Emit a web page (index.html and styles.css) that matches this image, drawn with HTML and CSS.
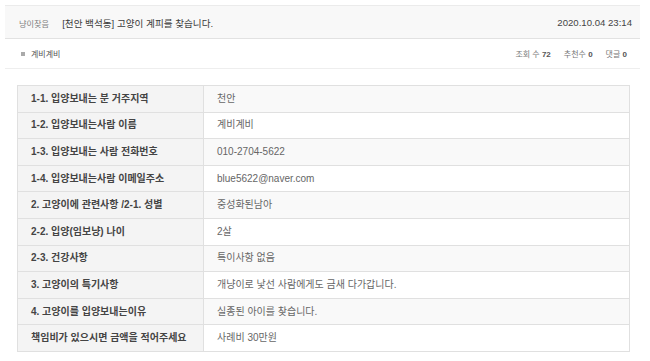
FILE: index.html
```html
<!DOCTYPE html>
<html lang="ko">
<head>
<meta charset="utf-8">
<link rel="stylesheet" href="styles.css">
</head>
<body>
<div class="post">
  <div class="post-head">
    <div class="title"><span class="cat">냥이찾음</span><span class="subject">[천안 백석동] 고양이 계피를 찾습니다.</span></div>
    <div class="date">2020.10.04 23:14</div>
  </div>
  <div class="post-info">
    <div class="author"><span class="sq"></span>계비계비</div>
    <div class="stats">
      <span>조회 수 <b>72</b></span>
      <span>추천수 <b>0</b></span>
      <span>댓글 <b>0</b></span>
    </div>
  </div>
  <table class="form">
    <tr class="odd"><th>1-1. 입양보내는 분 거주지역</th><td>천안</td></tr>
    <tr><th>1-2. 입양보내는사람 이름</th><td>계비계비</td></tr>
    <tr class="odd"><th>1-3. 입양보내는 사람 전화번호</th><td>010-2704-5622</td></tr>
    <tr><th>1-4. 입양보내는사람 이메일주소</th><td>blue5622@naver.com</td></tr>
    <tr class="odd"><th>2. 고양이에 관련사항 /2-1. 성별</th><td>중성화된남아</td></tr>
    <tr><th>2-2. 입양(임보냥) 나이</th><td>2살</td></tr>
    <tr class="odd"><th>2-3. 건강사항</th><td>특이사항 없음</td></tr>
    <tr><th>3. 고양이의 특기사항</th><td>개냥이로 낯선 사람에게도 금새 다가갑니다.</td></tr>
    <tr class="odd"><th>4. 고양이를 입양보내는이유</th><td>실종된 아이를 찾습니다.</td></tr>
    <tr><th>책임비가 있으시면 금액을 적어주세요</th><td>사례비 30만원</td></tr>
  </table>
</div>
</body>
</html>
```
FILE: styles.css
```css
html, body {
  margin: 0;
  padding: 0;
  background: #fff;
}
body {
  font-family: "Liberation Sans", "Noto Sans CJK KR", Arial, sans-serif;
  color: #333;
}
.post {
  margin: 5px 0 0 5px;
  width: 635px;
}
.post-head {
  display: flex;
  justify-content: space-between;
  align-items: center;
  height: 32px;
  background: #f8f8f8;
  border-top: 1px solid #ebebeb;
  border-bottom: 1px solid #e2e2e2;
  padding: 0 8px 0 14px;
}
.cat {
  font-size: 8.2px;
  color: #808080;
  margin-right: 13px;
}
.subject {
  font-size: 9.6px;
  color: #3a3a3a;
}
.date {
  font-size: 9.6px;
  color: #444;
}
.post-info {
  display: flex;
  justify-content: space-between;
  align-items: center;
  height: 29px;
  border-bottom: 1px solid #eeeeee;
  padding: 0 13px 0 16px;
  font-size: 8px;
  color: #555;
}
.author {
  display: flex;
  align-items: center;
}
.sq {
  display: inline-block;
  width: 4px;
  height: 4px;
  background: #aaa;
  margin-right: 6px;
}
.stats {
  display: flex;
  gap: 13px;
  color: #777;
}
.stats b {
  color: #555;
}
.form {
  margin: 16px 0 0 12px;
  width: 613px;
  border-collapse: collapse;
  font-size: 10px;
}
.form th, .form td {
  border: 1px solid #e0e0e0;
  height: 26.6px;
  padding: 0 13px;
  line-height: 14px;
  text-align: left;
  box-sizing: border-box;
}
.form th {
  width: 186px;
  background: #f4f4f4;
  color: #444;
  font-weight: bold;
}
.form td {
  color: #666;
  background: #fff;
}
.form tr.odd td {
  background: #f9f9f9;
}
```
